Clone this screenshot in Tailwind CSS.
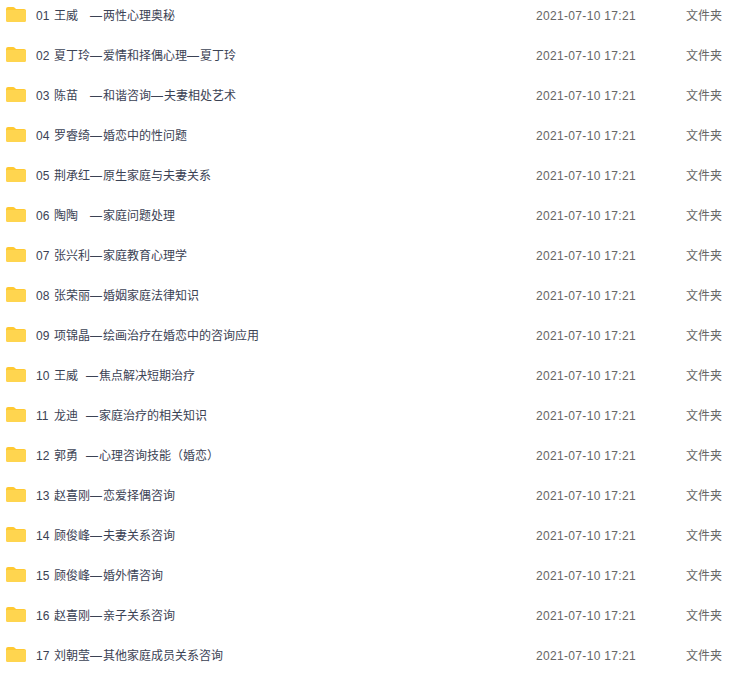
<!DOCTYPE html>
<html lang="zh-CN">
  <head>
    <meta charset="UTF-8" />
    <title>文件列表</title>
    <script src="https://cdn.jsdelivr.net/npm/@tailwindcss/browser@4"></script>
  </head>
  <body class="bg-white overflow-hidden">
    <ul id="list" class="-mt-[5px] font-['Liberation_Sans','Noto_Sans_CJK_SC',sans-serif] text-xs">
      <li class="flex h-10 items-center pt-[2px]"><svg class="ml-[6px] mt-[10px] h-[15px] w-[20px] shrink-0 self-start" viewBox="0 0 20 15"><path fill="#ffc933" d="M0 2Q0 0 2 0H7Q8 0 9 1L10 2H18Q20 2 20 4V13Q20 15 18 15H2Q0 15 0 13Z"/><path fill="#ffd54f" d="M0 4Q0 3 1 3H19Q20 3 20 4V13Q20 15 18 15H2Q0 15 0 13Z"/></svg><span class="ml-[10px] w-[18px] text-[#3b4254]">01</span><span class="w-[482px] whitespace-pre [word-spacing:0.67px] text-[#3b4254]">王威&#12288;<span class="tracking-[1px]">—</span>两性心理奥秘</span><span class="w-[150px] tracking-[0.33px] text-[#666]">2021-07-10 17:21</span><span class="text-[#666]">文件夹</span></li>
      <li class="flex h-10 items-center pt-[2px]"><svg class="ml-[6px] mt-[10px] h-[15px] w-[20px] shrink-0 self-start" viewBox="0 0 20 15"><path fill="#ffc933" d="M0 2Q0 0 2 0H7Q8 0 9 1L10 2H18Q20 2 20 4V13Q20 15 18 15H2Q0 15 0 13Z"/><path fill="#ffd54f" d="M0 4Q0 3 1 3H19Q20 3 20 4V13Q20 15 18 15H2Q0 15 0 13Z"/></svg><span class="ml-[10px] w-[18px] text-[#3b4254]">02</span><span class="w-[482px] whitespace-pre [word-spacing:0.67px] text-[#3b4254]">夏丁玲<span class="tracking-[1px]">—</span>爱情和择偶心理<span class="tracking-[1px]">—</span>夏丁玲</span><span class="w-[150px] tracking-[0.33px] text-[#666]">2021-07-10 17:21</span><span class="text-[#666]">文件夹</span></li>
      <li class="flex h-10 items-center pt-[2px]"><svg class="ml-[6px] mt-[10px] h-[15px] w-[20px] shrink-0 self-start" viewBox="0 0 20 15"><path fill="#ffc933" d="M0 2Q0 0 2 0H7Q8 0 9 1L10 2H18Q20 2 20 4V13Q20 15 18 15H2Q0 15 0 13Z"/><path fill="#ffd54f" d="M0 4Q0 3 1 3H19Q20 3 20 4V13Q20 15 18 15H2Q0 15 0 13Z"/></svg><span class="ml-[10px] w-[18px] text-[#3b4254]">03</span><span class="w-[482px] whitespace-pre [word-spacing:0.67px] text-[#3b4254]">陈苗&#12288;<span class="tracking-[1px]">—</span>和谐咨询<span class="tracking-[1px]">—</span>夫妻相处艺术</span><span class="w-[150px] tracking-[0.33px] text-[#666]">2021-07-10 17:21</span><span class="text-[#666]">文件夹</span></li>
      <li class="flex h-10 items-center pt-[2px]"><svg class="ml-[6px] mt-[10px] h-[15px] w-[20px] shrink-0 self-start" viewBox="0 0 20 15"><path fill="#ffc933" d="M0 2Q0 0 2 0H7Q8 0 9 1L10 2H18Q20 2 20 4V13Q20 15 18 15H2Q0 15 0 13Z"/><path fill="#ffd54f" d="M0 4Q0 3 1 3H19Q20 3 20 4V13Q20 15 18 15H2Q0 15 0 13Z"/></svg><span class="ml-[10px] w-[18px] text-[#3b4254]">04</span><span class="w-[482px] whitespace-pre [word-spacing:0.67px] text-[#3b4254]">罗睿绮<span class="tracking-[1px]">—</span>婚恋中的性问题</span><span class="w-[150px] tracking-[0.33px] text-[#666]">2021-07-10 17:21</span><span class="text-[#666]">文件夹</span></li>
      <li class="flex h-10 items-center pt-[2px]"><svg class="ml-[6px] mt-[10px] h-[15px] w-[20px] shrink-0 self-start" viewBox="0 0 20 15"><path fill="#ffc933" d="M0 2Q0 0 2 0H7Q8 0 9 1L10 2H18Q20 2 20 4V13Q20 15 18 15H2Q0 15 0 13Z"/><path fill="#ffd54f" d="M0 4Q0 3 1 3H19Q20 3 20 4V13Q20 15 18 15H2Q0 15 0 13Z"/></svg><span class="ml-[10px] w-[18px] text-[#3b4254]">05</span><span class="w-[482px] whitespace-pre [word-spacing:0.67px] text-[#3b4254]">荆承红<span class="tracking-[1px]">—</span>原生家庭与夫妻关系</span><span class="w-[150px] tracking-[0.33px] text-[#666]">2021-07-10 17:21</span><span class="text-[#666]">文件夹</span></li>
      <li class="flex h-10 items-center pt-[2px]"><svg class="ml-[6px] mt-[10px] h-[15px] w-[20px] shrink-0 self-start" viewBox="0 0 20 15"><path fill="#ffc933" d="M0 2Q0 0 2 0H7Q8 0 9 1L10 2H18Q20 2 20 4V13Q20 15 18 15H2Q0 15 0 13Z"/><path fill="#ffd54f" d="M0 4Q0 3 1 3H19Q20 3 20 4V13Q20 15 18 15H2Q0 15 0 13Z"/></svg><span class="ml-[10px] w-[18px] text-[#3b4254]">06</span><span class="w-[482px] whitespace-pre [word-spacing:0.67px] text-[#3b4254]">陶陶&#12288;<span class="tracking-[1px]">—</span>家庭问题处理</span><span class="w-[150px] tracking-[0.33px] text-[#666]">2021-07-10 17:21</span><span class="text-[#666]">文件夹</span></li>
      <li class="flex h-10 items-center pt-[2px]"><svg class="ml-[6px] mt-[10px] h-[15px] w-[20px] shrink-0 self-start" viewBox="0 0 20 15"><path fill="#ffc933" d="M0 2Q0 0 2 0H7Q8 0 9 1L10 2H18Q20 2 20 4V13Q20 15 18 15H2Q0 15 0 13Z"/><path fill="#ffd54f" d="M0 4Q0 3 1 3H19Q20 3 20 4V13Q20 15 18 15H2Q0 15 0 13Z"/></svg><span class="ml-[10px] w-[18px] text-[#3b4254]">07</span><span class="w-[482px] whitespace-pre [word-spacing:0.67px] text-[#3b4254]">张兴利<span class="tracking-[1px]">—</span>家庭教育心理学</span><span class="w-[150px] tracking-[0.33px] text-[#666]">2021-07-10 17:21</span><span class="text-[#666]">文件夹</span></li>
      <li class="flex h-10 items-center pt-[2px]"><svg class="ml-[6px] mt-[10px] h-[15px] w-[20px] shrink-0 self-start" viewBox="0 0 20 15"><path fill="#ffc933" d="M0 2Q0 0 2 0H7Q8 0 9 1L10 2H18Q20 2 20 4V13Q20 15 18 15H2Q0 15 0 13Z"/><path fill="#ffd54f" d="M0 4Q0 3 1 3H19Q20 3 20 4V13Q20 15 18 15H2Q0 15 0 13Z"/></svg><span class="ml-[10px] w-[18px] text-[#3b4254]">08</span><span class="w-[482px] whitespace-pre [word-spacing:0.67px] text-[#3b4254]">张荣丽<span class="tracking-[1px]">—</span>婚姻家庭法律知识</span><span class="w-[150px] tracking-[0.33px] text-[#666]">2021-07-10 17:21</span><span class="text-[#666]">文件夹</span></li>
      <li class="flex h-10 items-center pt-[2px]"><svg class="ml-[6px] mt-[10px] h-[15px] w-[20px] shrink-0 self-start" viewBox="0 0 20 15"><path fill="#ffc933" d="M0 2Q0 0 2 0H7Q8 0 9 1L10 2H18Q20 2 20 4V13Q20 15 18 15H2Q0 15 0 13Z"/><path fill="#ffd54f" d="M0 4Q0 3 1 3H19Q20 3 20 4V13Q20 15 18 15H2Q0 15 0 13Z"/></svg><span class="ml-[10px] w-[18px] text-[#3b4254]">09</span><span class="w-[482px] whitespace-pre [word-spacing:0.67px] text-[#3b4254]">项锦晶<span class="tracking-[1px]">—</span>绘画治疗在婚恋中的咨询应用</span><span class="w-[150px] tracking-[0.33px] text-[#666]">2021-07-10 17:21</span><span class="text-[#666]">文件夹</span></li>
      <li class="flex h-10 items-center pt-[2px]"><svg class="ml-[6px] mt-[10px] h-[15px] w-[20px] shrink-0 self-start" viewBox="0 0 20 15"><path fill="#ffc933" d="M0 2Q0 0 2 0H7Q8 0 9 1L10 2H18Q20 2 20 4V13Q20 15 18 15H2Q0 15 0 13Z"/><path fill="#ffd54f" d="M0 4Q0 3 1 3H19Q20 3 20 4V13Q20 15 18 15H2Q0 15 0 13Z"/></svg><span class="ml-[10px] w-[18px] text-[#3b4254]">10</span><span class="w-[482px] whitespace-pre [word-spacing:0.67px] text-[#3b4254]">王威  <span class="tracking-[1px]">—</span>焦点解决短期治疗</span><span class="w-[150px] tracking-[0.33px] text-[#666]">2021-07-10 17:21</span><span class="text-[#666]">文件夹</span></li>
      <li class="flex h-10 items-center pt-[2px]"><svg class="ml-[6px] mt-[10px] h-[15px] w-[20px] shrink-0 self-start" viewBox="0 0 20 15"><path fill="#ffc933" d="M0 2Q0 0 2 0H7Q8 0 9 1L10 2H18Q20 2 20 4V13Q20 15 18 15H2Q0 15 0 13Z"/><path fill="#ffd54f" d="M0 4Q0 3 1 3H19Q20 3 20 4V13Q20 15 18 15H2Q0 15 0 13Z"/></svg><span class="ml-[10px] w-[18px] text-[#3b4254]">11</span><span class="w-[482px] whitespace-pre [word-spacing:0.67px] text-[#3b4254]">龙迪  <span class="tracking-[1px]">—</span>家庭治疗的相关知识</span><span class="w-[150px] tracking-[0.33px] text-[#666]">2021-07-10 17:21</span><span class="text-[#666]">文件夹</span></li>
      <li class="flex h-10 items-center pt-[2px]"><svg class="ml-[6px] mt-[10px] h-[15px] w-[20px] shrink-0 self-start" viewBox="0 0 20 15"><path fill="#ffc933" d="M0 2Q0 0 2 0H7Q8 0 9 1L10 2H18Q20 2 20 4V13Q20 15 18 15H2Q0 15 0 13Z"/><path fill="#ffd54f" d="M0 4Q0 3 1 3H19Q20 3 20 4V13Q20 15 18 15H2Q0 15 0 13Z"/></svg><span class="ml-[10px] w-[18px] text-[#3b4254]">12</span><span class="w-[482px] whitespace-pre [word-spacing:0.67px] text-[#3b4254]">郭勇  <span class="tracking-[1px]">—</span>心理咨询技能（婚恋）</span><span class="w-[150px] tracking-[0.33px] text-[#666]">2021-07-10 17:21</span><span class="text-[#666]">文件夹</span></li>
      <li class="flex h-10 items-center pt-[2px]"><svg class="ml-[6px] mt-[10px] h-[15px] w-[20px] shrink-0 self-start" viewBox="0 0 20 15"><path fill="#ffc933" d="M0 2Q0 0 2 0H7Q8 0 9 1L10 2H18Q20 2 20 4V13Q20 15 18 15H2Q0 15 0 13Z"/><path fill="#ffd54f" d="M0 4Q0 3 1 3H19Q20 3 20 4V13Q20 15 18 15H2Q0 15 0 13Z"/></svg><span class="ml-[10px] w-[18px] text-[#3b4254]">13</span><span class="w-[482px] whitespace-pre [word-spacing:0.67px] text-[#3b4254]">赵喜刚<span class="tracking-[1px]">—</span>恋爱择偶咨询</span><span class="w-[150px] tracking-[0.33px] text-[#666]">2021-07-10 17:21</span><span class="text-[#666]">文件夹</span></li>
      <li class="flex h-10 items-center pt-[2px]"><svg class="ml-[6px] mt-[10px] h-[15px] w-[20px] shrink-0 self-start" viewBox="0 0 20 15"><path fill="#ffc933" d="M0 2Q0 0 2 0H7Q8 0 9 1L10 2H18Q20 2 20 4V13Q20 15 18 15H2Q0 15 0 13Z"/><path fill="#ffd54f" d="M0 4Q0 3 1 3H19Q20 3 20 4V13Q20 15 18 15H2Q0 15 0 13Z"/></svg><span class="ml-[10px] w-[18px] text-[#3b4254]">14</span><span class="w-[482px] whitespace-pre [word-spacing:0.67px] text-[#3b4254]">顾俊峰<span class="tracking-[1px]">—</span>夫妻关系咨询</span><span class="w-[150px] tracking-[0.33px] text-[#666]">2021-07-10 17:21</span><span class="text-[#666]">文件夹</span></li>
      <li class="flex h-10 items-center pt-[2px]"><svg class="ml-[6px] mt-[10px] h-[15px] w-[20px] shrink-0 self-start" viewBox="0 0 20 15"><path fill="#ffc933" d="M0 2Q0 0 2 0H7Q8 0 9 1L10 2H18Q20 2 20 4V13Q20 15 18 15H2Q0 15 0 13Z"/><path fill="#ffd54f" d="M0 4Q0 3 1 3H19Q20 3 20 4V13Q20 15 18 15H2Q0 15 0 13Z"/></svg><span class="ml-[10px] w-[18px] text-[#3b4254]">15</span><span class="w-[482px] whitespace-pre [word-spacing:0.67px] text-[#3b4254]">顾俊峰<span class="tracking-[1px]">—</span>婚外情咨询</span><span class="w-[150px] tracking-[0.33px] text-[#666]">2021-07-10 17:21</span><span class="text-[#666]">文件夹</span></li>
      <li class="flex h-10 items-center pt-[2px]"><svg class="ml-[6px] mt-[10px] h-[15px] w-[20px] shrink-0 self-start" viewBox="0 0 20 15"><path fill="#ffc933" d="M0 2Q0 0 2 0H7Q8 0 9 1L10 2H18Q20 2 20 4V13Q20 15 18 15H2Q0 15 0 13Z"/><path fill="#ffd54f" d="M0 4Q0 3 1 3H19Q20 3 20 4V13Q20 15 18 15H2Q0 15 0 13Z"/></svg><span class="ml-[10px] w-[18px] text-[#3b4254]">16</span><span class="w-[482px] whitespace-pre [word-spacing:0.67px] text-[#3b4254]">赵喜刚<span class="tracking-[1px]">—</span>亲子关系咨询</span><span class="w-[150px] tracking-[0.33px] text-[#666]">2021-07-10 17:21</span><span class="text-[#666]">文件夹</span></li>
      <li class="flex h-10 items-center pt-[2px]"><svg class="ml-[6px] mt-[10px] h-[15px] w-[20px] shrink-0 self-start" viewBox="0 0 20 15"><path fill="#ffc933" d="M0 2Q0 0 2 0H7Q8 0 9 1L10 2H18Q20 2 20 4V13Q20 15 18 15H2Q0 15 0 13Z"/><path fill="#ffd54f" d="M0 4Q0 3 1 3H19Q20 3 20 4V13Q20 15 18 15H2Q0 15 0 13Z"/></svg><span class="ml-[10px] w-[18px] text-[#3b4254]">17</span><span class="w-[482px] whitespace-pre [word-spacing:0.67px] text-[#3b4254]">刘朝莹<span class="tracking-[1px]">—</span>其他家庭成员关系咨询</span><span class="w-[150px] tracking-[0.33px] text-[#666]">2021-07-10 17:21</span><span class="text-[#666]">文件夹</span></li>
    </ul>
  </body>
</html>
